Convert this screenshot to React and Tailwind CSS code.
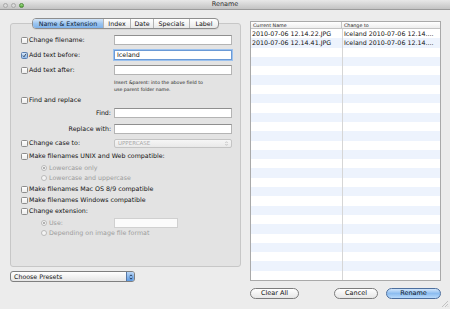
import React from "react";

const TABS = [
  { id: "name", label: "Name & Extension", w: "w-[70px]" },
  { id: "index", label: "Index", w: "w-[27px]" },
  { id: "date", label: "Date", w: "w-[23px]" },
  { id: "specials", label: "Specials", w: "w-[36px]" },
  { id: "label", label: "Label", w: "w-[29px]" },
];

const FILES = [
  { cur: "2010-07-06 12.14.22.JPG", next: "Iceland 2010-07-06 12.14...." },
  { cur: "2010-07-06 12.14.41.JPG", next: "Iceland 2010-07-06 12.14...." },
];

function Check({ checked }) {
  return (
    <span
      className={`flex h-[7px] w-[7px] shrink-0 items-center justify-center rounded-[1.5px] border ${
        checked
          ? "border-[#5a7fb0] bg-gradient-to-b from-[#d6e6f8] to-[#8fb8e8]"
          : "border-[#8d8d8d] bg-gradient-to-b from-white to-[#ececec]"
      }`}
    >
      {checked && (
        <svg viewBox="0 0 8 8" className="h-[7px] w-[7px]">
          <path d="M1.5 4.2 L3.2 6 L6.8 1" fill="none" stroke="#1d2a3a" strokeWidth="1.3" />
        </svg>
      )}
    </span>
  );
}

function Radio({ on }) {
  return (
    <span className="flex h-[6px] w-[6px] shrink-0 items-center justify-center rounded-full border border-[#b9b9b9] bg-[#f4f4f4]">
      {on && <span className="h-[2px] w-[2px] rounded-full bg-[#9a9a9a]" />}
    </span>
  );
}

function Field({ value, focus, w = "w-[118px]" }) {
  return (
    <div
      className={`flex h-[10px] ${w} items-center border bg-white px-[2px] text-[6.3px] text-[#111] ${
        focus
          ? "border-[#6b9ad6] shadow-[0_0_0_1px_#9cc2ef]"
          : "border-[#b4b4b4] border-t-[#8f8f8f]"
      }`}
    >
      {value}
    </div>
  );
}

function CheckRow({ label, checked, field, focus, mt }) {
  return (
    <div className={`flex h-[10px] items-center ${mt}`}>
      <div className="flex w-[103px] items-center gap-[1px] pl-[10px]">
        <Check checked={checked} />
        <span className="whitespace-nowrap">{label}</span>
      </div>
      {field !== undefined && <Field value={field} focus={focus} />}
    </div>
  );
}

function Option({ label, checked, mt }) {
  return (
    <div className={`flex h-[10px] items-center gap-[1px] pl-[10px] ${mt}`}>
      <Check checked={checked} />
      <span className="whitespace-nowrap">{label}</span>
    </div>
  );
}

function RadioRow({ label, on, mt, children }) {
  return (
    <div className={`flex h-[10px] items-center text-[#9c9c9c] ${mt}`}>
      <div className="flex w-[103px] items-center gap-[2px] pl-[30px]">
        <Radio on={on} />
        <span className="whitespace-nowrap">{label}</span>
      </div>
      {children}
    </div>
  );
}

function Pill({ children, blue, w }) {
  return (
    <button
      className={`flex h-[11px] ${w} items-center justify-center rounded-full border text-[6.5px] ${
        blue
          ? "border-[#4d6f9e] bg-gradient-to-b from-[#d2e6fb] via-[#8dbdf0] to-[#b9dafb] text-[#0d1626]"
          : "border-[#7c7c7c] bg-gradient-to-b from-white to-[#e6e6e6] text-[#111]"
      }`}
    >
      {children}
    </button>
  );
}

export default function App() {
  return (
    <div
      className="relative flex h-[309px] w-[450px] flex-col overflow-hidden bg-[#ececec] text-[6.3px] text-[#111]"
      style={{ fontFamily: '"DejaVu Sans", "Liberation Sans", sans-serif' }}
    >
      {/* Title bar */}
      <div className="relative flex h-[10px] shrink-0 items-center justify-center border-b border-[#9b9b9b] bg-gradient-to-b from-[#e8e8e8] to-[#c3c3c3]">
        <div className="absolute left-[3px] top-[2.5px] flex gap-[3px]">
          <span className="h-[5px] w-[5px] rounded-full border border-[#a8a8a8] bg-[#d9d9d9]" />
          <span className="h-[5px] w-[5px] rounded-full border border-[#a8a8a8] bg-[#d9d9d9]" />
          <span className="h-[5px] w-[5px] rounded-full border border-[#4e8a3a] bg-gradient-to-b from-[#a7e08d] to-[#4fa933]" />
        </div>
        <span className="text-[6.5px] text-[#2e2e2e]">Rename</span>
      </div>

      <div className="flex flex-1">
        {/* Left column */}
        <div className="ml-[10px] mt-[8px] flex w-[231px] flex-col">
          <div className="relative z-10 flex h-[11px] pl-[22px]">
            <div className="flex shrink-0 overflow-hidden rounded-[4px] border border-[#8e8e8e] bg-gradient-to-b from-white to-[#e9e9e9] shadow-[0_1px_0_#d6d6d6]">
              {TABS.map((t, i) => (
                <div
                  key={t.id}
                  className={`flex ${t.w} shrink-0 items-center justify-center whitespace-nowrap ${
                    i > 0 ? "border-l border-[#b3b3b3]" : ""
                  } ${
                    i === 0
                      ? "bg-gradient-to-b from-[#d3e5f8] via-[#9cc5f0] to-[#7fb2ea] text-[#0d1a30]"
                      : "text-[#111]"
                  }`}
                >
                  {t.label}
                </div>
              ))}
            </div>
          </div>
          <div className="-mt-[6px] flex h-[244px] flex-col rounded-[3px] border border-[#c7c7c7] bg-[#e3e3e3] pt-[11px]">
            <CheckRow label="Change filename:" field="" />
            <CheckRow label="Add text before:" checked field="Iceland" focus mt="mt-[5px]" />
            <CheckRow label="Add text after:" field="" mt="mt-[5px]" />
            <div className="mt-[5px] pl-[103px] text-[4.7px] leading-[6.5px] text-[#222]">
              <div>Insert &amp;parent: into the above field to</div>
              <div>use parent folder name.</div>
            </div>
            <Option label="Find and replace" mt="mt-[2px]" />
            <div className="mt-[3px] flex h-[10px] items-center">
              <span className="w-[103px] pr-[3px] text-right">Find:</span>
              <Field value="" />
            </div>
            <div className="mt-[6px] flex h-[10px] items-center">
              <span className="w-[103px] pr-[3px] text-right">Replace with:</span>
              <Field value="" />
            </div>
            <div className="mt-[4px] flex h-[10px] items-center">
              <div className="flex w-[103px] items-center gap-[1px] pl-[10px]">
                <Check />
                <span>Change case to:</span>
              </div>
              <div className="flex h-[9px] w-[118px] items-center justify-between rounded-[2px] border border-[#c4c4c4] bg-gradient-to-b from-[#f6f6f6] to-[#e9e9e9] px-[3px] text-[5.5px] text-[#a9a9a9]">
                <span>UPPERCASE</span>
                <svg viewBox="0 0 4 7" className="h-[5px] w-[3px]">
                  <path d="M0.5 2.6 L2 1 L3.5 2.6 M0.5 4.4 L2 6 L3.5 4.4" fill="none" stroke="#a0a0a0" strokeWidth="0.8" />
                </svg>
              </div>
            </div>
            <Option label="Make filenames UNIX and Web compatible:" mt="mt-[3px]" />
            <RadioRow label="Lowercase only" on mt="mt-[2px]" />
            <RadioRow label="Lowercase and uppercase" />
            <Option label="Make filenames Mac OS 8/9 compatible" mt="mt-[1px]" />
            <Option label="Make filenames Windows compatible" mt="mt-[1px]" />
            <Option label="Change extension:" mt="mt-[1px]" />
            <RadioRow label="Use:" on mt="mt-[2px]">
              <div className="h-[10px] w-[64px] border border-[#d0d0d0] bg-[#fbfbfb]" />
            </RadioRow>
            <RadioRow label="Depending on image file format" />
          </div>
          <div className="mt-[4px] flex h-[11px] w-[125px] items-center justify-between overflow-hidden rounded-[3px] border border-[#7f7f7f] bg-gradient-to-b from-white to-[#e6e6e6] pl-[3px] text-[#111]">
            <span>Choose Presets</span>
            <div className="flex h-full w-[8px] items-center justify-center border-l border-[#5677a5] bg-gradient-to-b from-[#b9d6f6] to-[#5c9ae2]">
              <svg viewBox="0 0 4 7" className="h-[6px] w-[4px]">
                <path d="M0.5 2.6 L2 1 L3.5 2.6 M0.5 4.4 L2 6 L3.5 4.4" fill="none" stroke="#10223d" strokeWidth="0.9" />
              </svg>
            </div>
          </div>
        </div>

        {/* Right column */}
        <div className="ml-[9px] mt-[11px] flex w-[191px] flex-col">
          <div className="flex h-[260px] flex-col overflow-hidden border border-[#a9a9a9] bg-white">
            <div className="flex h-[7px] shrink-0 border-b border-[#c4c4c4] bg-gradient-to-b from-white to-[#ededed] text-[4.8px] text-[#222]">
              <div className="w-[91px] border-r border-[#c4c4c4] pl-[2px] leading-[7px]">Current Name</div>
              <div className="pl-[2px] leading-[7px]">Change to</div>
            </div>
            <div className="relative flex-1">
              {Array.from({ length: 28 }).map((_, i) => (
                <div
                  key={i}
                  className={`flex h-[9.3px] items-center text-[6.3px] ${i % 2 ? "bg-[#edf3fd]" : "bg-white"}`}
                >
                  <div className="w-[91px] whitespace-nowrap pl-[1px]">{FILES[i]?.cur}</div>
                  <div className="whitespace-nowrap pl-[2px]">{FILES[i]?.next}</div>
                </div>
              ))}
              <div className="absolute bottom-0 left-[91px] top-0 w-px bg-[#d6d6d6]" />
            </div>
          </div>
          <div className="mt-[7px] flex items-center">
            <Pill w="w-[49px]">Clear All</Pill>
            <div className="ml-[35px]">
              <Pill w="w-[44px]">Cancel</Pill>
            </div>
            <div className="ml-[8px]">
              <Pill blue w="w-[55px]">Rename</Pill>
            </div>
          </div>
        </div>
      </div>

      {/* Resize grip */}
      <svg viewBox="0 0 8 8" className="absolute bottom-[1px] right-[1px] h-[8px] w-[8px]">
        <path d="M7 1 L1 7 M7 4 L4 7 M7 6.5 L6.5 7" stroke="#a6a6a6" strokeWidth="0.6" />
      </svg>
    </div>
  );
}
